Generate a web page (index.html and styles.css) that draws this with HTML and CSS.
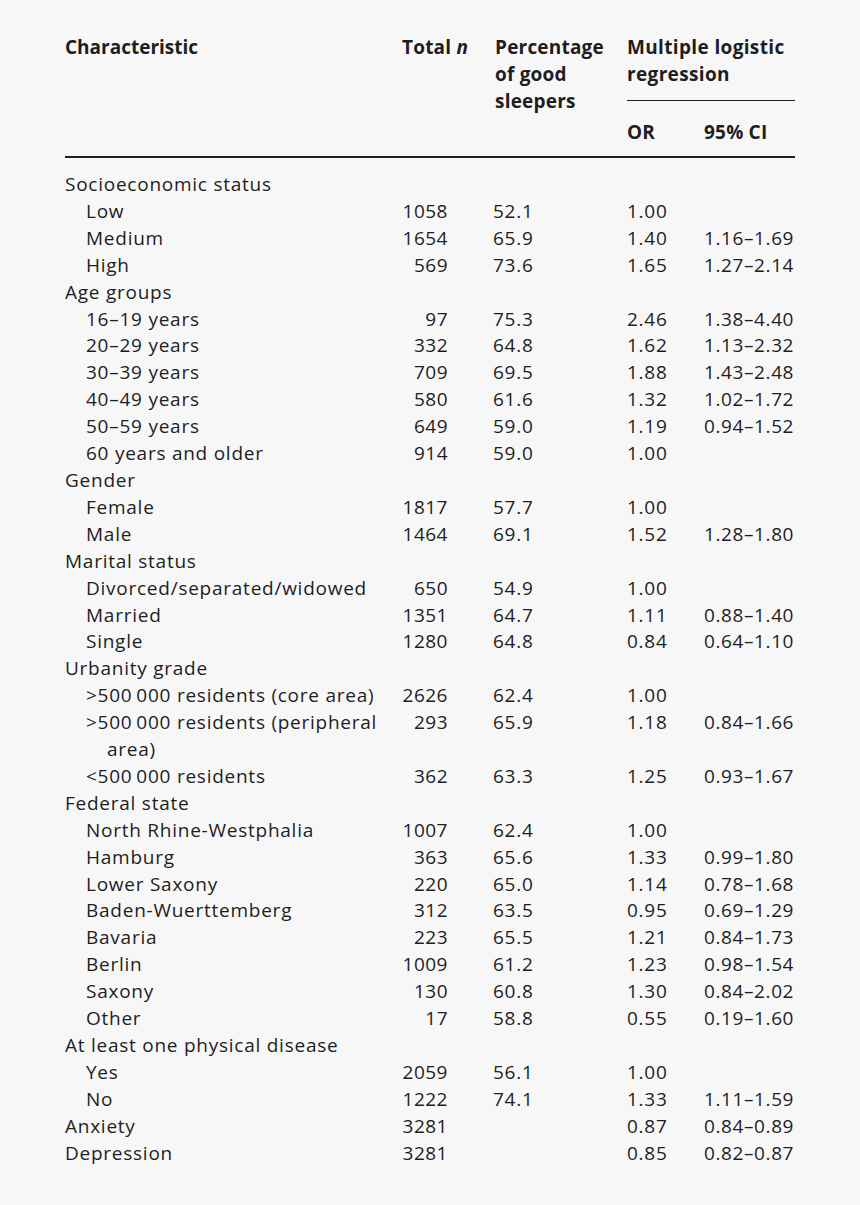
FILE: index.html
```html
<!DOCTYPE html>
<html lang="en">
<head>
<meta charset="utf-8">
<title>Good sleepers table</title>
<link rel="stylesheet" href="styles.css">
</head>
<body>
<table class="tbl">
  <colgroup>
    <col class="c1"><col class="c2"><col class="c3"><col class="c4"><col class="c5">
  </colgroup>
  <thead>
    <tr>
      <th rowspan="2" class="h-char">Characteristic</th>
      <th rowspan="2" class="h-total">Total <i>n</i></th>
      <th rowspan="2" class="h-pct">Percentage of&nbsp;good sleepers</th>
      <th colspan="2" class="h-mlr">Multiple logistic regression</th>
    </tr>
    <tr>
      <th class="h-sub">OR</th>
      <th class="h-sub">95% CI</th>
    </tr>
  </thead>
  <tbody>
    <tr class="first"><td class="grp">Socioeconomic status</td><td class="n"></td><td class="p"></td><td class="or"></td><td class="ci"></td></tr>
    <tr><td class="item">Low</td><td class="n">1058</td><td class="p">52.1</td><td class="or">1.00</td><td class="ci"></td></tr>
    <tr><td class="item">Medium</td><td class="n">1654</td><td class="p">65.9</td><td class="or">1.40</td><td class="ci">1.16–1.69</td></tr>
    <tr><td class="item">High</td><td class="n">569</td><td class="p">73.6</td><td class="or">1.65</td><td class="ci">1.27–2.14</td></tr>
    <tr><td class="grp">Age groups</td><td class="n"></td><td class="p"></td><td class="or"></td><td class="ci"></td></tr>
    <tr><td class="item">16–19 years</td><td class="n">97</td><td class="p">75.3</td><td class="or">2.46</td><td class="ci">1.38–4.40</td></tr>
    <tr><td class="item">20–29 years</td><td class="n">332</td><td class="p">64.8</td><td class="or">1.62</td><td class="ci">1.13–2.32</td></tr>
    <tr><td class="item">30–39 years</td><td class="n">709</td><td class="p">69.5</td><td class="or">1.88</td><td class="ci">1.43–2.48</td></tr>
    <tr><td class="item">40–49 years</td><td class="n">580</td><td class="p">61.6</td><td class="or">1.32</td><td class="ci">1.02–1.72</td></tr>
    <tr><td class="item">50–59 years</td><td class="n">649</td><td class="p">59.0</td><td class="or">1.19</td><td class="ci">0.94–1.52</td></tr>
    <tr><td class="item">60 years and older</td><td class="n">914</td><td class="p">59.0</td><td class="or">1.00</td><td class="ci"></td></tr>
    <tr><td class="grp">Gender</td><td class="n"></td><td class="p"></td><td class="or"></td><td class="ci"></td></tr>
    <tr><td class="item">Female</td><td class="n">1817</td><td class="p">57.7</td><td class="or">1.00</td><td class="ci"></td></tr>
    <tr><td class="item">Male</td><td class="n">1464</td><td class="p">69.1</td><td class="or">1.52</td><td class="ci">1.28–1.80</td></tr>
    <tr><td class="grp">Marital status</td><td class="n"></td><td class="p"></td><td class="or"></td><td class="ci"></td></tr>
    <tr><td class="item">Divorced/separated/widowed</td><td class="n">650</td><td class="p">54.9</td><td class="or">1.00</td><td class="ci"></td></tr>
    <tr><td class="item">Married</td><td class="n">1351</td><td class="p">64.7</td><td class="or">1.11</td><td class="ci">0.88–1.40</td></tr>
    <tr><td class="item">Single</td><td class="n">1280</td><td class="p">64.8</td><td class="or">0.84</td><td class="ci">0.64–1.10</td></tr>
    <tr><td class="grp">Urbanity grade</td><td class="n"></td><td class="p"></td><td class="or"></td><td class="ci"></td></tr>
    <tr><td class="item">&gt;500&thinsp;000 residents (core area)</td><td class="n">2626</td><td class="p">62.4</td><td class="or">1.00</td><td class="ci"></td></tr>
    <tr><td class="item">&gt;500&thinsp;000 residents (peripheral area)</td><td class="n">293</td><td class="p">65.9</td><td class="or">1.18</td><td class="ci">0.84–1.66</td></tr>
    <tr><td class="item">&lt;500&thinsp;000 residents</td><td class="n">362</td><td class="p">63.3</td><td class="or">1.25</td><td class="ci">0.93–1.67</td></tr>
    <tr><td class="grp">Federal state</td><td class="n"></td><td class="p"></td><td class="or"></td><td class="ci"></td></tr>
    <tr><td class="item">North Rhine-Westphalia</td><td class="n">1007</td><td class="p">62.4</td><td class="or">1.00</td><td class="ci"></td></tr>
    <tr><td class="item">Hamburg</td><td class="n">363</td><td class="p">65.6</td><td class="or">1.33</td><td class="ci">0.99–1.80</td></tr>
    <tr><td class="item">Lower Saxony</td><td class="n">220</td><td class="p">65.0</td><td class="or">1.14</td><td class="ci">0.78–1.68</td></tr>
    <tr><td class="item">Baden-Wuerttemberg</td><td class="n">312</td><td class="p">63.5</td><td class="or">0.95</td><td class="ci">0.69–1.29</td></tr>
    <tr><td class="item">Bavaria</td><td class="n">223</td><td class="p">65.5</td><td class="or">1.21</td><td class="ci">0.84–1.73</td></tr>
    <tr><td class="item">Berlin</td><td class="n">1009</td><td class="p">61.2</td><td class="or">1.23</td><td class="ci">0.98–1.54</td></tr>
    <tr><td class="item">Saxony</td><td class="n">130</td><td class="p">60.8</td><td class="or">1.30</td><td class="ci">0.84–2.02</td></tr>
    <tr><td class="item">Other</td><td class="n">17</td><td class="p">58.8</td><td class="or">0.55</td><td class="ci">0.19–1.60</td></tr>
    <tr><td class="grp">At least one physical disease</td><td class="n"></td><td class="p"></td><td class="or"></td><td class="ci"></td></tr>
    <tr><td class="item">Yes</td><td class="n">2059</td><td class="p">56.1</td><td class="or">1.00</td><td class="ci"></td></tr>
    <tr><td class="item">No</td><td class="n">1222</td><td class="p">74.1</td><td class="or">1.33</td><td class="ci">1.11–1.59</td></tr>
    <tr><td class="grp">Anxiety</td><td class="n">3281</td><td class="p"></td><td class="or">0.87</td><td class="ci">0.84–0.89</td></tr>
    <tr><td class="grp">Depression</td><td class="n">3281</td><td class="p"></td><td class="or">0.85</td><td class="ci">0.82–0.87</td></tr>
  </tbody>
</table>
</body>
</html>
```

FILE: styles.css
```css
html, body {
  margin: 0;
  padding: 0;
  background: #f7f7f7;
}

body {
  padding: 34px 0 0 65px;
  color: #1e1e1e;
  font-family: "Open Sans", "Noto Sans", "Liberation Sans", sans-serif;
  font-size: 19px;
}

.tbl {
  border-collapse: collapse;
  table-layout: fixed;
  width: 730px;
}

.c1 { width: 320px; }
.c2 { width: 85px; }
.c3 { width: 157px; }
.c4 { width: 77px; }
.c5 { width: 91px; }

.tbl th,
.tbl td {
  padding: 0;
  line-height: 27px;
  text-align: left;
  vertical-align: top;
  white-space: normal;
}

.tbl th {
  font-weight: 700;
  letter-spacing: 0.2px;
}

.tbl th.h-char {
  letter-spacing: 0;
}

.tbl th.h-total {
  padding-left: 17px;
  white-space: nowrap;
}

.h-total i {
  font-style: italic;
}

.tbl th.h-pct {
  padding-left: 25px;
  padding-right: 0;
}

.h-char,
.h-total,
.h-pct {
  border-bottom: 2px solid #1e1e1e;
}

.tbl th.h-mlr {
  padding-bottom: 13px;
  position: relative;
  letter-spacing: 0.35px;
}

.h-mlr::after {
  content: "";
  position: absolute;
  left: 0;
  right: 0;
  bottom: 0;
  height: 1.5px;
  background: #1e1e1e;
}

.tbl th.h-sub {
  padding-top: 18px;
  padding-bottom: 10px;
  border-bottom: 2px solid #1e1e1e;
  white-space: nowrap;
}

.tbl td {
  line-height: 26.9px;
  letter-spacing: 0.75px;
}

.tbl td.n,
.tbl td.p,
.tbl td.or,
.tbl td.ci {
  white-space: nowrap;
}

.tbl td.ci {
  letter-spacing: 0.6px;
}

.tbl tr.first td {
  padding-top: 13px;
}

.tbl td.item {
  padding-left: 42px;
  text-indent: -21px;
}

.tbl td.n {
  text-align: right;
  padding-right: 22px;
  letter-spacing: 0.5px;
}

.tbl td.p {
  padding-left: 23px;
}
```
